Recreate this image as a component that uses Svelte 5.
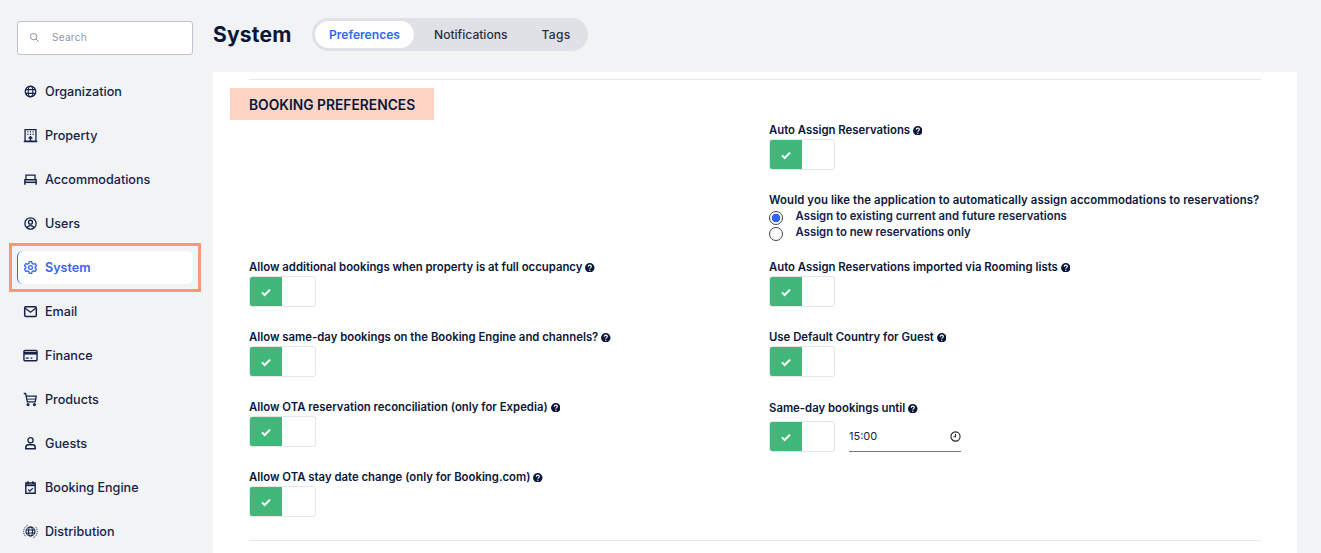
<script>
  const nav = ['Organization','Property','Accommodations','Users','System','Email','Finance','Products','Guests','Booking Engine','Distribution'];
  const left = [
    'Allow additional bookings when property is at full occupancy',
    'Allow same-day bookings on the Booking Engine and channels?',
    'Allow OTA reservation reconciliation (only for Expedia)',
    'Allow OTA stay date change (only for Booking.com)'
  ];
  const right = ['Auto Assign Reservations imported via Rooming lists','Use Default Country for Guest'];
</script>

{#snippet help()}
  <svg class="help" viewBox="0 0 10 10"><circle cx="5" cy="5" r="5" fill="#0b1739"/><path d="M3.4 3.9c0-1 .8-1.6 1.7-1.6s1.6.6 1.6 1.4c0 1.2-1.6 1.2-1.6 2.3" fill="none" stroke="#fff" stroke-width="1.2"/><circle cx="5.1" cy="7.6" r=".7" fill="#fff"/></svg>
{/snippet}

{#snippet toggle()}
  <div class="toggle">
    <div class="on"><svg viewBox="0 0 12 12" class="check"><path d="M2 6.4l2.7 2.6L10 3.6" fill="none" stroke="#fff" stroke-width="2"/></svg></div>
  </div>
{/snippet}

{#snippet icon(name)}
  <svg class="ico" viewBox="0 0 16 16" fill="none" stroke="currentColor" stroke-width="1.4">
    {#if name === 'Organization'}
      <circle cx="8" cy="8" r="5.6"/><ellipse cx="8" cy="8" rx="2.5" ry="5.6" stroke-width="1.2"/><path d="M2.6 6h10.8M2.6 10h10.8" stroke-width="1.2"/>
    {:else if name === 'Property'}
      <path d="M2.2 1.8h11.6V14H2.2zM.8 14.4h14.4"/><path d="M4.6 4.2h1.2M7.4 4.2h1.2M10.2 4.2h1.2M4.6 6.8h1.2M7.4 6.8h1.2M10.2 6.8h1.2" stroke-width="1.3"/><path d="M8 14V9.4M6 11.2l2-2 2 2" stroke-width="1.5"/>
    {:else if name === 'Accommodations'}
      <path d="M3.2 8V3.4h9.6V8"/><path d="M2 13.6V8.2h12v5.4" stroke-width="1.5"/><path d="M1.6 11h12.8" stroke-width="1.6"/>
    {:else if name === 'Users'}
      <circle cx="8" cy="8" r="6"/><circle cx="8" cy="6.6" r="2.1"/><path d="M4.4 12.4c.8-1.6 2-2.2 3.6-2.2s2.8.6 3.6 2.2"/>
    {:else if name === 'System'}
      <path d="M6.7 1.8h2.6l.4 1.8 1.6.9 1.8-.6 1.3 2.2-1.4 1.3v1.2l1.4 1.3-1.3 2.2-1.8-.6-1.6.9-.4 1.8H6.7l-.4-1.8-1.6-.9-1.8.6-1.3-2.2 1.4-1.3V7.4L1.6 6.1l1.3-2.2 1.8.6 1.6-.9z" stroke-linejoin="round"/><circle cx="8" cy="8" r="2"/>
    {:else if name === 'Email'}
      <rect x="1.8" y="3" width="12.4" height="10.2" rx="1.2" stroke-width="1.6"/><path d="M2.4 4.5L8 8.8l5.6-4.3"/>
    {:else if name === 'Finance'}
      <rect x="1" y="2.6" width="14" height="11" rx="1" stroke-width="1.5"/><path d="M1 5.6h14" stroke-width="2.8"/><path d="M3 10.8h3M8 10.8h2" stroke-width="1.3"/>
    {:else if name === 'Products'}
      <path d="M.8 1.6h2l1.8 9h8.4l1.2-6.2H3.4" stroke-linejoin="round"/><path d="M4.6 7.6h9" stroke-width="1"/><circle cx="5.4" cy="13.4" r="1"/><circle cx="12.2" cy="13.4" r="1"/>
    {:else if name === 'Guests'}
      <circle cx="8" cy="4.6" r="2.8"/><path d="M3 13.6v-1.6c0-1.6 1.4-2.6 3-2.6h4c1.6 0 3 1 3 2.6v1.6z" stroke-width="1.6"/>
    {:else if name === 'Booking Engine'}
      <path d="M3 3.2h10v11H3z" stroke-width="1.5"/><path d="M3 5.6h10" stroke-width="2"/><path d="M5.4 1.2v3M10.6 1.2v3" stroke-width="1.6"/><path d="M5.6 10.2l1.7 1.7 3.2-3.2"/>
    {:else}
      <circle cx="8" cy="8" r="4.8" stroke-width="1.2"/><ellipse cx="8" cy="8" rx="2.1" ry="4.8" stroke-width="1.1"/><path d="M3.2 6.4h9.6M3.2 9.6h9.6" stroke-width="1.1"/><path d="M2.5 13A7.4 7.4 0 0 1 5.5 1.2M13.5 3A7.4 7.4 0 0 1 10.5 14.8" stroke-dasharray="1.4 1" stroke-width="1"/>
    {/if}
  </svg>
{/snippet}

<div class="page">
  <aside class="sidebar">
    <label class="search">
      <svg viewBox="0 0 12 12" class="search-ico"><circle cx="5" cy="5" r="3.5" fill="none" stroke="#7c8798" stroke-width="1"/><path d="M7.6 7.6l3 3" stroke="#7c8798" stroke-width="1"/></svg>
      <span>Search</span>
    </label>
    <nav class="nav">
      {#each nav as item}
        <div class="item" class:active={item === 'System'}>
          {@render icon(item)}
          <span>{item}</span>
        </div>
      {/each}
    </nav>
    <div class="highlight"></div>
  </aside>

  <main class="main">
    <header class="header">
      <h1>System</h1>
      <div class="tabs">
        <div class="tab current">Preferences</div>
        <div class="tab t2">Notifications</div>
        <div class="tab t3">Tags</div>
      </div>
    </header>
    <section class="card">
      <hr class="rule" />
      <h2 class="tag">BOOKING PREFERENCES</h2>
      <div class="cols">
        <div class="col leftcol">
          {#each left as text}
            <div class="field">
              <div class="label">{text} {@render help()}</div>
              {@render toggle()}
            </div>
          {/each}
        </div>
        <div class="col">
          <div class="label">Auto Assign Reservations {@render help()}</div>
          {@render toggle()}
          <div class="label question">Would you like the application to automatically assign accommodations to reservations?</div>
          <div class="radio"><span class="dot sel"></span><span>Assign to existing current and future reservations</span></div>
          <div class="radio"><span class="dot"></span><span>Assign to new reservations only</span></div>
          <div class="rights">
            {#each right as text}
              <div class="field">
                <div class="label">{text} {@render help()}</div>
                {@render toggle()}
              </div>
            {/each}
            <div class="field last">
              <div class="label">Same-day bookings until {@render help()}</div>
              <div class="timerow">
                {@render toggle()}
                <div class="time">
                  <span>15:00</span>
                  <svg viewBox="0 0 12 12" class="clock"><circle cx="6" cy="6" r="5" fill="none" stroke="#222" stroke-width="1.2"/><path d="M6 3.2V6.4H3.8" fill="none" stroke="#222" stroke-width="1.1"/></svg>
                </div>
              </div>
            </div>
          </div>
        </div>
      </div>
      <hr class="rule bottom" />
    </section>
  </main>
</div>

<style>
  :global(body) { margin: 0; background: #f2f3f5; overflow: hidden; }
  .page { display: flex; height: 553px; overflow: hidden; font-family: "Inter", "Liberation Sans", sans-serif; color: #0b1739; }
  .sidebar { width: 213px; flex: none; position: relative; box-sizing: border-box; padding: 21px 20px 0 17px; }
  .search { display: flex; align-items: center; box-sizing: border-box; height: 34px; background: #fff; border: 1px solid #bcc3ce; border-radius: 3px; padding: 0 0 2px 11px; font-size: 10px; color: #8d97a8; letter-spacing: .3px; }
  .search-ico { width: 11px; height: 11px; margin-right: 12px; }
  .nav { display: flex; flex-direction: column; margin-top: 20px; }
  .item { display: flex; align-items: center; height: 33px; margin-bottom: 11px; padding-left: 6px; font-size: 12.6px; font-weight: 500; border-radius: 6px; box-sizing: border-box; color: #14224a; }
  .item span { margin-left: 7px; }
  .ico { width: 15px; height: 15px; flex: none; }
  .item.active { background: #fff; color: #3565f2; font-weight: 600; border-left: 1px solid #3565f2; padding-left: 5px; }
  .highlight { position: absolute; left: 9px; top: 243px; width: 192px; height: 49px; box-sizing: border-box; border: 3px solid #fb9873; pointer-events: none; }
  .main { flex: none; width: 1084px; display: flex; flex-direction: column; }
  .header { display: flex; align-items: center; height: 72px; padding-bottom: 4px; box-sizing: border-box; }
  h1 { margin: 0; font-size: 21px; font-weight: 700; letter-spacing: .2px; width: 99px; color: #0b1739; }
  .tabs { display: flex; align-items: center; height: 33px; background: #dfe1e6; border-radius: 17px; padding: 3px; box-sizing: border-box; width: 276px; font-size: 12.1px; font-weight: 500; color: #2a2f42; }
  .tab { text-align: center; }
  .current { background: #fff; color: #3565f2; font-weight: 600; border-radius: 14px; width: 99px; line-height: 27px; }
  .t2 { margin-left: 20px; }
  .t3 { margin-left: 34px; letter-spacing: .3px; }
  .card { flex: 1; background: #fff; position: relative; padding: 7px 36px 0; }
  .rule { border: 0; height: 1px; background: #e7e9ec; margin: 0; }
  .bottom { position: absolute; left: 36px; right: 36px; top: 468px; }
  .tag { margin: 8px 0 0 -19px; width: 204px; height: 32px; box-sizing: border-box; background: #fed5c5; font-size: 13.8px; font-weight: 600; line-height: 34px; padding-left: 19px; color: #0b1739; }
  .cols { display: flex; }
  .col { display: flex; flex-direction: column; }
  .leftcol { width: 520px; padding-top: 140px; }
  .leftcol .toggle { width: 67px; }
  .label { font-size: 11.35px; font-weight: 600; line-height: 15px; height: 14px; color: #0b1739; white-space: nowrap; }
  .col > .label:first-child { margin-top: 3px; }
  .help { width: 9.5px; height: 9.5px; vertical-align: -1px; }
  .toggle { width: 66px; height: 31px; box-sizing: border-box; border: 1px solid #e3e5e8; border-radius: 3px; margin-top: 2px; overflow: hidden; background: #fff; flex: none; }
  .on { width: 32px; height: 100%; background: #41b879; display: flex; align-items: center; justify-content: center; }
  .check { width: 12px; height: 12px; }
  .field { height: 70px; }
  .field.last { margin-top: 1px; }
  .question { margin-top: 23px; margin-bottom: 2px; letter-spacing: .097px; }
  .radio { display: flex; align-items: flex-start; font-size: 11.35px; font-weight: 600; height: 16px; line-height: 15px; color: #14224a; white-space: nowrap; }
  .dot { width: 14px; height: 14px; box-sizing: border-box; border: 1px solid #444; border-radius: 50%; margin-top: 2px; margin-right: 12.5px; background: #fff; flex: none; }
  .dot.sel { background: radial-gradient(circle, #2f62f5 0 4px, #fff 4.6px); }
  .rights { margin-top: 19px; }
  .timerow { display: flex; align-items: flex-start; margin-top: 6px; }
  .timerow .toggle { margin-top: 0; }
  .time { margin-left: 14px; width: 112px; height: 31px; box-sizing: border-box; border-bottom: 1px solid #777; display: flex; align-items: center; justify-content: space-between; font-size: 11px; color: #14224a; position: relative; }
  .clock { width: 11px; height: 11px; margin-top: 1px; }
</style>
